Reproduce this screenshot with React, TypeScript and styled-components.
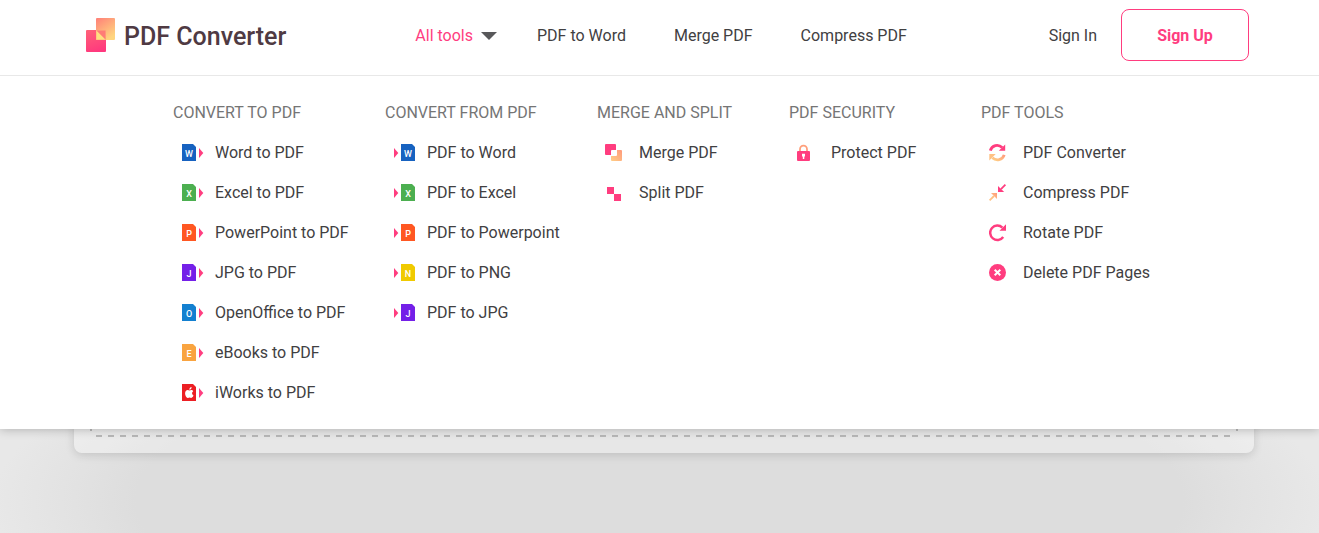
import React from "react";
import styled, { createGlobalStyle } from "styled-components";

const PINK = "#ff3d7f";

const GlobalStyle = createGlobalStyle`
  * { box-sizing: border-box; }
  body { margin: 0; font-family: Roboto, "Liberation Sans", sans-serif; font-size: 16px; line-height: 24px; color: #414042; }
`;

const Page = styled.div`
  min-height: 100vh;
  display: flex;
  flex-direction: column;
  background: radial-gradient(ellipse 680px 200px at 50% 501px, #ddd 77%, #e2e2e2 86%, #e8e8e8 98%);
`;

const Header = styled.header`
  position: relative;
  display: flex;
  align-items: center;
  padding: 9px 70px 14px 86px;
  border-bottom: 1px solid #e8e8e8;
  background: #fff;
`;

const Brand = styled.a`
  display: flex;
  align-items: center;
  gap: 8px;
  color: #4f3a43;
  font-size: 25px;
  font-weight: 500;
  line-height: 34px;
  text-decoration: none;
  white-space: nowrap;
`;

const BrandName = styled.span`
  padding-top: 3px;
`;

const Nav = styled.nav`
  display: flex;
  align-items: center;
  gap: 48px;
  margin-left: 129px;
  padding-top: 2px;
  white-space: nowrap;
`;

const NavLink = styled.a`
  color: inherit;
  text-decoration: none;
`;

const MenuButton = styled.button`
  display: flex;
  align-items: center;
  gap: 8px;
  margin-right: -8px;
  padding: 0;
  border: 0;
  background: none;
  color: ${PINK};
  font: inherit;
  cursor: pointer;
`;

const Account = styled.div`
  display: flex;
  align-items: baseline;
  gap: 24px;
  margin-left: auto;
  white-space: nowrap;
`;

const SignUp = styled.button`
  width: 128px;
  height: 52px;
  padding: 2px 0 0;
  border: 1px solid ${PINK};
  border-radius: 8px;
  background: #fff;
  color: ${PINK};
  font: inherit;
  font-weight: 700;
  cursor: pointer;
`;

const Menu = styled.div`
  position: absolute;
  top: 100%;
  left: 0;
  right: 0;
  z-index: 1;
  display: grid;
  grid-template-columns: 212px 212px 192px 192px 1fr;
  margin-top: 1px;
  padding: 17px 70px 16px 173px;
  background: #fff;
  box-shadow: 0 0 10px rgba(0, 0, 0, 0.27);
  clip-path: inset(0 0 -20px 0);
`;

const Heading = styled.h2`
  margin: 0;
  color: #757575;
  font-size: 16px;
  font-weight: 400;
  line-height: 40px;
  text-transform: uppercase;
`;

const List = styled.ul`
  margin: 0;
  padding: 0;
  list-style: none;
`;

const ToolLink = styled.a`
  display: flex;
  align-items: center;
  gap: 10px;
  height: 40px;
  padding-left: 8px;
  color: inherit;
  text-decoration: none;
  white-space: nowrap;
`;

const Main = styled.main`
  flex: 1;
  display: flex;
  padding: 40px 65px 80px 74px;
`;

const DropArea = styled.section`
  flex: 1;
  display: flex;
  padding: 22px;
  border-radius: 8px;
  background: rgba(255, 255, 255, 0.3);
  box-shadow: 0 2px 10px rgba(0, 0, 0, 0.14);
`;

const DashFrame = styled.svg`
  flex: 1;
  width: 100%;
  height: auto;
  min-width: 0;
  overflow: visible;
  stroke: #b8b8b8;
  stroke-width: 2;
  stroke-dasharray: 6 6;
`;

const Logo = () => (
  <svg width="30" height="34" viewBox="0 0 30 34" aria-hidden="true">
    <defs>
      <linearGradient id="logoBack" x1="0" y1="0" x2="0.6" y2="1">
        <stop offset="0" stopColor="#ff7f78" />
        <stop offset="1" stopColor="#ffd57f" />
      </linearGradient>
      <linearGradient id="logoFront" x1="0.3" y1="0" x2="0.6" y2="1">
        <stop offset="0" stopColor="#ff5f78" />
        <stop offset="1" stopColor="#ff387e" />
      </linearGradient>
    </defs>
    <rect x="10" y="0" width="19" height="22" rx="1" fill="url(#logoBack)" />
    <rect x="0" y="12" width="20" height="22" rx="1" fill="url(#logoFront)" />
    <rect x="10" y="12" width="10" height="10" fill="#ffb27c" />
    <path d="M10.5 12.5V21.5H19.5Z" fill="#ffdf80" />
    <path d="M10.5 12.5H19.5V21.5Z" fill="#ff7c76" />
  </svg>
);

type FileProps = { color: string; letter: string; from?: boolean };

const FileIcon = ({ color, letter, from }: FileProps) => (
  <svg width="24" height="20" viewBox="0 1 24 20" aria-hidden="true">
    <path d={from ? "M1 6L5.3 11L1 16Z" : "M18 6L22.3 11L18 16Z"} fill={PINK} />
    <g transform={from ? "translate(8 0)" : "translate(1 0)"}>
      <path d="M0 2H11L14 5V19H0Z" fill={color} />
      {letter === "apple" ? (
        <g fill="#fff" transform="translate(0 1)">
          <path d="M10.7 7.5C9.7 6.7 8.4 7.1 7.5 7.5C6.4 7 4.8 6.7 3.8 7.9C2.4 9.7 3.3 13.4 5.2 14.7C6.1 15.3 6.8 14.6 7.6 14.6C8.4 14.6 9.1 15.3 10 14.6C10.7 14.1 11.2 13.2 11.5 12.4C9.7 11.7 9.5 9.1 11.2 8.3Z" />
          <path d="M7.3 6.7C7.2 5.2 8.2 4.1 9.6 3.9C9.7 5.4 8.7 6.5 7.3 6.7Z" />
        </g>
      ) : (
        <text x="7" y="15" textAnchor="middle" fill="#fff" fontFamily="Roboto, sans-serif" fontWeight="500" fontSize="9">{letter}</text>
      )}
    </g>
  </svg>
);

const WarmGradient = ({ id }: { id: string }) => (
  <defs>
    <linearGradient id={id} x1="1" y1="0" x2="0" y2="1">
      <stop offset="0" stopColor="#ff9a7c" />
      <stop offset="1" stopColor="#ffce85" />
    </linearGradient>
  </defs>
);

const icons = {
  merge: (
    <>
      <WarmGradient id="warmMerge" />
      <path d="M0 3Q0 2 1 2H10Q11 2 11 3V8H7Q6 8 6 9V13H1Q0 13 0 12Z" fill={PINK} />
      <path d="M12 8H16Q17 8 17 9V18Q17 19 16 19H7Q6 19 6 18V14H11Q12 14 12 13Z" fill="url(#warmMerge)" />
    </>
  ),
  split: <path d="M2 5H9V12H16V19H9V12H2Z" fill={PINK} />,
  lock: (
    <>
      <path d="M3 9V7.3A3.5 3.7 0 0 1 10 7.3V9" fill="none" stroke="#ffa07c" strokeWidth="1.8" />
      <rect x="0" y="9" width="13" height="10" rx="1" fill={PINK} />
      <path d="M5 11.7H8V14.5H7.3V17H5.8V14.5H5Z" fill="#fff" />
    </>
  ),
  convert: (
    <>
      <WarmGradient id="warmConvert" />
      <path d="M1.3 8.6C2.8 3.2 9.2 1.7 13.2 5.5" fill="none" stroke={PINK} strokeWidth="2.8" />
      <path d="M16.2 2.5V8.8H9.8Z" fill={PINK} />
      <path d="M15.2 12.8C13.6 18 7.4 19.4 3.3 15.7" fill="none" stroke="url(#warmConvert)" strokeWidth="2.8" />
      <path d="M0.3 18.4V12.1H6.7Z" fill="#ffc184" />
    </>
  ),
  compress: (
    <>
      <WarmGradient id="warmCompress" />
      <path d="M16.4 2.7L12 7.1" stroke={PINK} strokeWidth="1.8" />
      <path d="M9 4V10H15.2Z" fill={PINK} />
      <path d="M0.6 18.4L5 14" stroke="#ffc184" strokeWidth="1.8" />
      <path d="M2 11H8V17Z" fill="url(#warmCompress)" />
    </>
  ),
  rotate: (
    <>
      <path d="M13.4 5.6A7.2 7.2 0 1 0 14.2 15" fill="none" stroke={PINK} strokeWidth="2.5" />
      <path d="M17 2.3V8.8H10.5Z" fill={PINK} />
    </>
  ),
  remove: (
    <>
      <circle cx="8.5" cy="10.5" r="8.5" fill={PINK} />
      <path d="M5.7 7.7L11.3 13.3M11.3 7.7L5.7 13.3" stroke="#fff" strokeWidth="2" />
    </>
  ),
};

const ToolIcon = ({ name }: { name: keyof typeof icons }) => (
  <svg width="24" height="20" viewBox="0 1 24 20" aria-hidden="true">{icons[name]}</svg>
);

const file = (color: string, letter: string, from = false) => <FileIcon color={color} letter={letter} from={from} />;

const groups: { title: string; tools: [string, React.ReactNode][] }[] = [
  {
    title: "Convert to PDF",
    tools: [
      ["Word to PDF", file("#1762c0", "W")],
      ["Excel to PDF", file("#4caf50", "X")],
      ["PowerPoint to PDF", file("#ff5722", "P")],
      ["JPG to PDF", file("#7420e8", "J")],
      ["OpenOffice to PDF", file("#1380d0", "O")],
      ["eBooks to PDF", file("#f9a440", "E")],
      ["iWorks to PDF", file("#ec1f24", "apple")],
    ],
  },
  {
    title: "Convert from PDF",
    tools: [
      ["PDF to Word", file("#1762c0", "W", true)],
      ["PDF to Excel", file("#4caf50", "X", true)],
      ["PDF to Powerpoint", file("#ff5722", "P", true)],
      ["PDF to PNG", file("#f0ca00", "N", true)],
      ["PDF to JPG", file("#7420e8", "J", true)],
    ],
  },
  {
    title: "Merge and split",
    tools: [
      ["Merge PDF", <ToolIcon name="merge" />],
      ["Split PDF", <ToolIcon name="split" />],
    ],
  },
  { title: "PDF security", tools: [["Protect PDF", <ToolIcon name="lock" />]] },
  {
    title: "PDF tools",
    tools: [
      ["PDF Converter", <ToolIcon name="convert" />],
      ["Compress PDF", <ToolIcon name="compress" />],
      ["Rotate PDF", <ToolIcon name="rotate" />],
      ["Delete PDF Pages", <ToolIcon name="remove" />],
    ],
  },
];

export default function App() {
  return (
    <Page>
      <GlobalStyle />
      <Header>
        <Brand href="#"><Logo /><BrandName>PDF Converter</BrandName></Brand>
        <Nav>
          <MenuButton type="button" aria-expanded="true">
            All tools
            <svg width="16" height="8" viewBox="0 0 16 8" aria-hidden="true"><path d="M0 0H16L8 8Z" fill="#58585a" /></svg>
          </MenuButton>
          <NavLink href="#">PDF to Word</NavLink>
          <NavLink href="#">Merge PDF</NavLink>
          <NavLink href="#">Compress PDF</NavLink>
        </Nav>
        <Account>
          <NavLink href="#">Sign In</NavLink>
          <SignUp type="button">Sign Up</SignUp>
        </Account>
        <Menu>
          {groups.map((group) => (
            <section key={group.title}>
              <Heading>{group.title}</Heading>
              <List>
                {group.tools.map(([label, icon]) => (
                  <li key={label}><ToolLink href="#">{icon}{label}</ToolLink></li>
                ))}
              </List>
            </section>
          ))}
        </Menu>
      </Header>
      <Main>
        <DropArea>
          <DashFrame aria-hidden="true">
            <line x1="0" y1="0" x2="100%" y2="0" transform="translate(0 -5)" />
            <line x1="0" y1="100%" x2="100%" y2="100%" transform="translate(0 5)" />
            <line x1="0" y1="100%" x2="0" y2="0" transform="translate(-5 0)" />
            <line x1="100%" y1="100%" x2="100%" y2="0" transform="translate(5 0)" />
          </DashFrame>
        </DropArea>
      </Main>
    </Page>
  );
}
